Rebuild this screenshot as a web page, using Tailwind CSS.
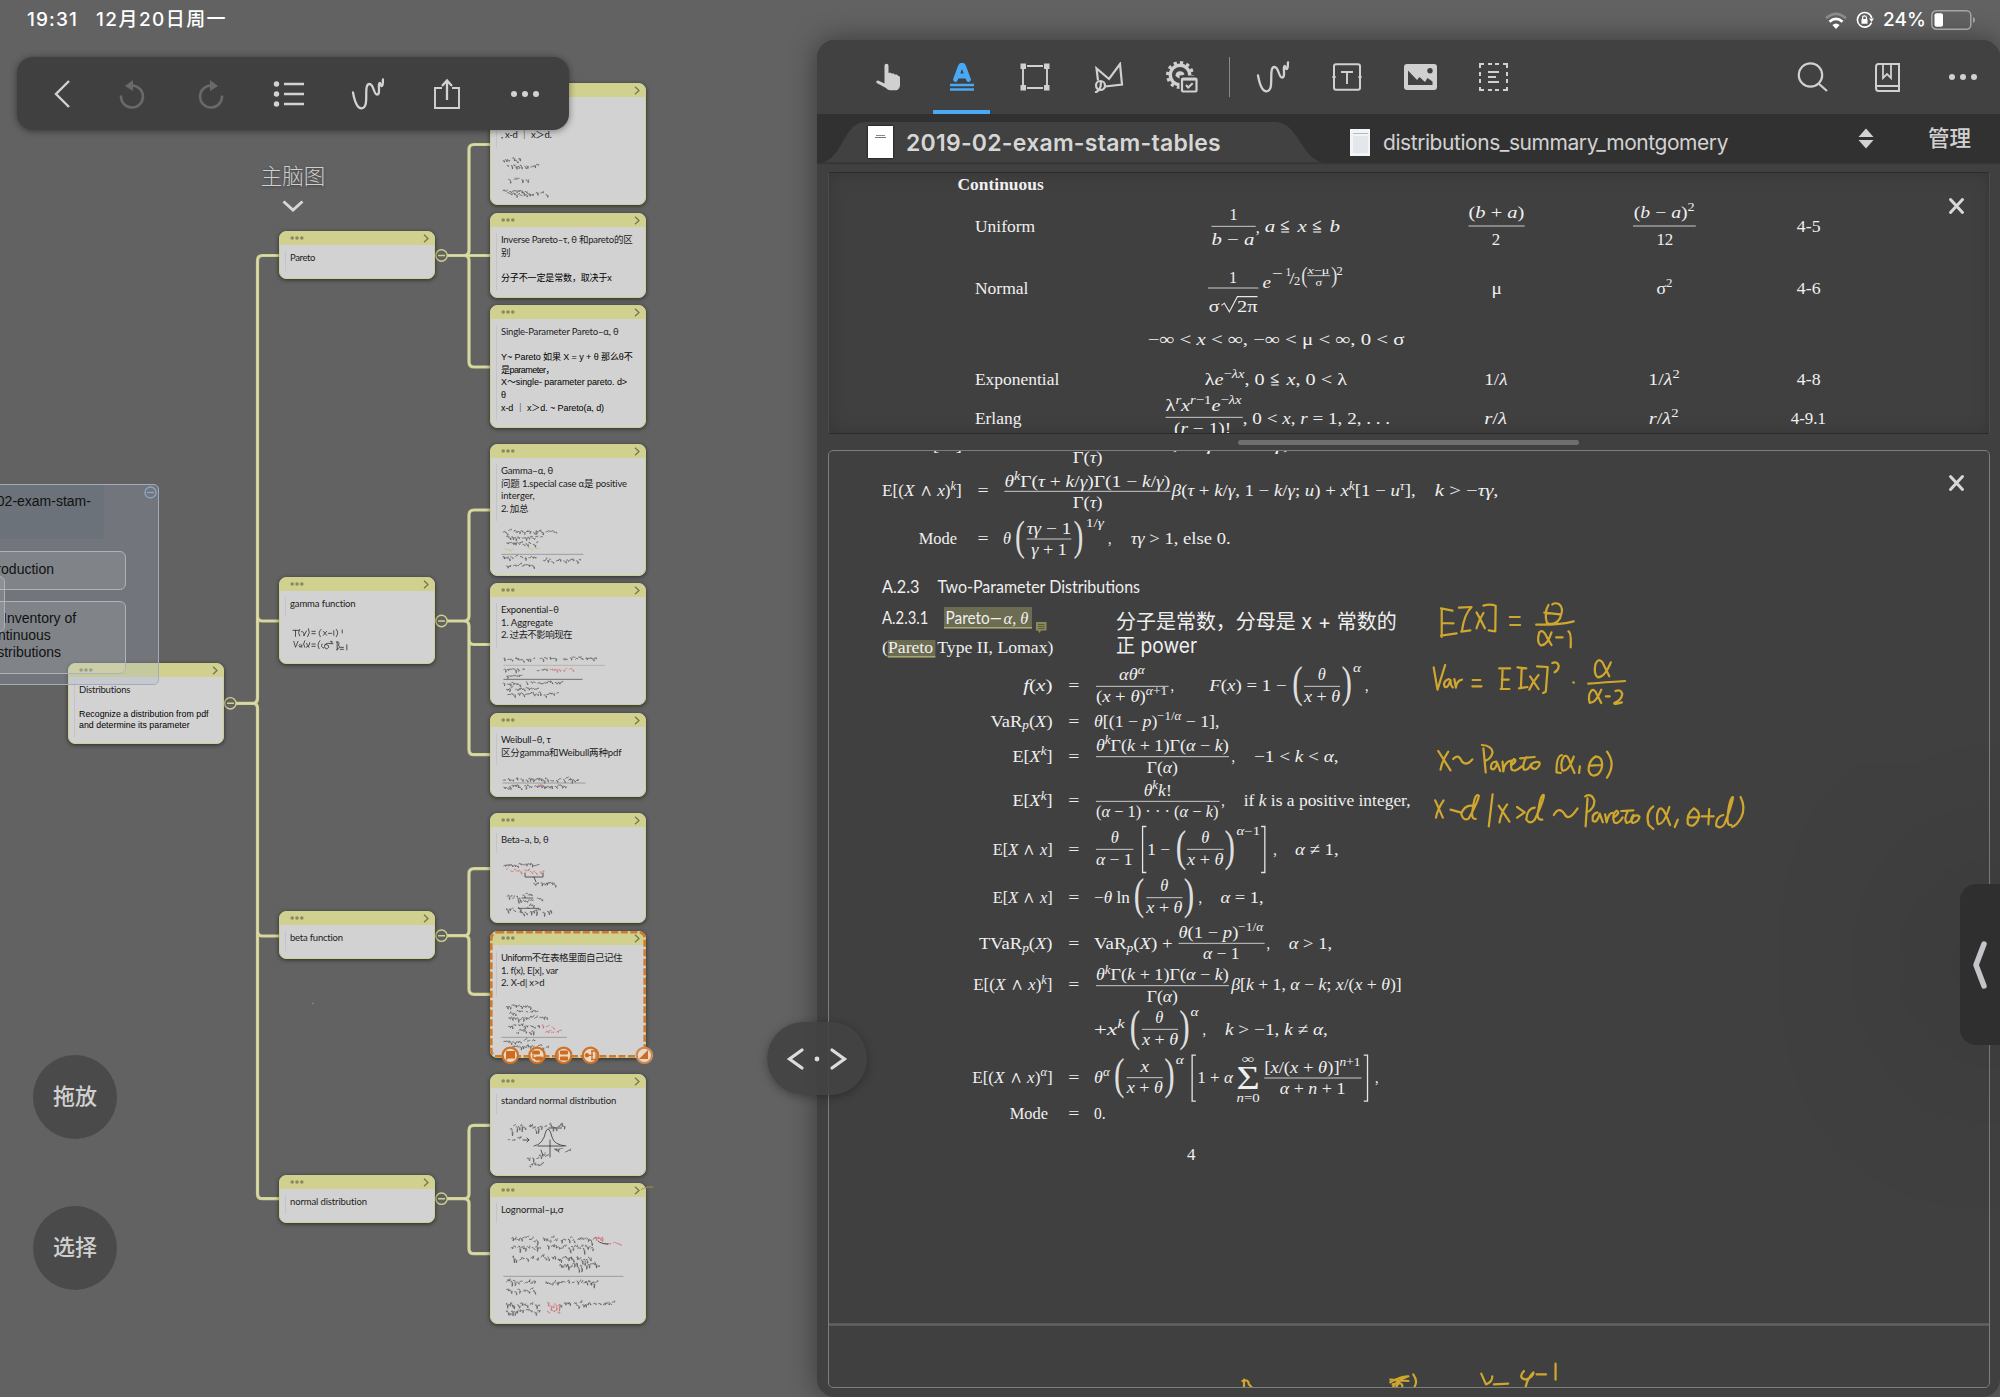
<!DOCTYPE html>
<html lang="zh">
<head>
<meta charset="utf-8">
<title>2019-02-exam-stam-tables</title>
<script src="https://cdn.jsdelivr.net/npm/@tailwindcss/browser@4"></script>
</head>
<body>
<div class="relative flex h-[1397px] w-[2000px] overflow-hidden bg-[#626262] font-['Inter','Noto_Sans_CJK_SC',sans-serif]">

  <!-- Mind map canvas -->
  <section class="relative h-full w-[817px] shrink-0">
    <svg class="absolute left-0 top-0" width="817" height="1397" viewBox="0 0 817 1397" fill="none">
      <defs>
        <g id="links">
          <path d="M236 703.3H253q4.5 0 4.500 -5V261q0-5.500 5-5.500H280M257.500 616q0 5 5 5H280M257.500 931q0 5 5 5H280M253 703.300q4.500 0 4.500 5V1193.700q0 5 5 5H280"/>
          <path d="M447 255.500H464q5 0 5-5V149.500q0-5 5-5H491M464 255.500H491M464 255.500q5 0 5 5V362q0 5 5 5H491"/>
          <path d="M447 621H464q5 0 5-5V515q0-5 5-5H491M464 621q5 0 5 5V749.700q0 5 5 5H491M469 639.500q0 5 5 5H491"/>
          <path d="M447 935.700H464q5 0 5-5V873.700q0-5 5-5H491M464 935.700q5 0 5 5V989.300q0 5 5 5H491"/>
          <path d="M447 1198.700H464q5 0 5-5V1130.300q0-5 5-5H491M464 1198.700q5 0 5 5V1248.700q0 5 5 5H491"/>
        </g>
      </defs>
      <use href="#links" stroke="#d0d18e" stroke-width="3.200"/>
      <use href="#links" stroke="#dcdcb8" stroke-width="1"/>
      <g stroke="#d0d18e" stroke-width="1.400">
        <path d="M236 703.300a5.700 5.700 0 1 0-11.400 0a5.700 5.700 0 1 0 11.400 0M227 703.300h7"/>
        <path d="M447.200 255.500a5.700 5.700 0 1 0-11.400 0a5.700 5.700 0 1 0 11.400 0M438 255.500h7"/>
        <path d="M447.200 621a5.700 5.700 0 1 0-11.400 0a5.700 5.700 0 1 0 11.400 0M438 621h7"/>
        <path d="M447.200 935.700a5.700 5.700 0 1 0-11.400 0a5.700 5.700 0 1 0 11.400 0M438 935.700h7"/>
        <path d="M447.200 1198.700a5.700 5.700 0 1 0-11.400 0a5.700 5.700 0 1 0 11.400 0M438 1198.700h7"/>
      </g>
    </svg>

    <div id="nodes"></div>

    <svg id="sketches" class="absolute left-0 top-0" width="817" height="1397" viewBox="0 0 817 1397" fill="none" stroke-linecap="round" stroke-linejoin="round"></svg>

    <!-- Selection handles of the active card -->
    <svg class="absolute left-0 top-0" width="817" height="1397" viewBox="0 0 817 1397" fill="none">
      <g fill="#e6d9c8" stroke="#cf7226" stroke-width="2.200">
        <circle cx="510.300" cy="1055.300" r="7.700"/><circle cx="537" cy="1055.300" r="7.700"/><circle cx="563.700" cy="1055.300" r="7.700"/><circle cx="590.500" cy="1055.300" r="7.700"/>
        <circle cx="644.400" cy="1055.300" r="7.700" stroke="#cf8a52"/>
      </g>
      <g fill="#cf6a20">
        <path d="M506 1051h9v7.500h-7l-2 1.800z"/>
        <rect x="532" y="1050.500" width="8" height="4" rx="1.500"/><rect x="535" y="1056.500" width="8" height="4" rx="1.500"/>
        <rect x="560" y="1050.500" width="8" height="4" rx="1"/><rect x="560" y="1056.500" width="8" height="4" rx="1"/>
        <circle cx="587" cy="1055.300" r="2.200"/><path d="M648 1050v9h-9z"/>
      </g>
      <path d="M558 1052.500v6M533 1055v3h3M587 1055.300h6M591 1051l5 0M591 1059.500h5M592 1051v8.500M596 1051v8.500" stroke="#cf6a20" stroke-width="1.300"/>
      <path d="M641 1190c3-3 8-3 12-3" stroke="#a89748" stroke-width="1"/>
      <circle cx="313" cy="1003.500" r="1" fill="#8f8a45"/>
    </svg>

    <!-- Document outline group, partly off canvas -->
    <div class="absolute left-[-40px] top-[484px] h-[201px] w-[199px] rounded-[5px] border border-[#a3abb7] bg-[#a5b2cc]/25 font-['Liberation_Sans',sans-serif] text-sm leading-[17px] text-[#111]">
      <div class="h-[54px] w-[143px] bg-[#56646c]/20 pt-[8px] pr-[17px] text-right whitespace-nowrap">2019-02-exam-stam-</div>
      <div class="mt-[12px] flex h-[39px] w-[165px] items-center justify-end rounded-md border border-[#aeb2b8] bg-white/10 pr-[71px] pb-[3px]">Introduction</div>
      <div class="mt-[11px] h-[73px] w-[165px] rounded-md border border-[#aeb2b8] bg-white/10 pt-[8px] pl-[26px] whitespace-nowrap">
        <div class="pl-[15px]">Inventory of</div><div class="-ml-2">Continuous</div><div class="-ml-1">Distributions</div>
      </div>
      <svg class="absolute right-[1px] top-[1px]" width="13" height="13" viewBox="0 0 13 13" fill="none" stroke="#8ea6ca" stroke-width="1.300"><circle cx="6.500" cy="6.500" r="5.500"/><path d="M3 6.500h7"/></svg>
    </div>
    <div class="absolute left-[-20px] top-[576px] h-[56px] w-[25px] rounded-md border border-[#aeb2b8] bg-white/10"></div>

    <header class="absolute left-[27px] top-[6px] flex h-7 items-center gap-[18px] text-[19px] font-medium text-white">
      <span data-w="51">19:31</span><span data-w="131">12月20日周一</span>
    </header>

    <nav class="absolute left-[17px] top-[57px] flex h-[73px] w-[552px] items-center rounded-2xl bg-[#404040] pl-[13px] text-[#d2d2d2] shadow-[0_1px_7px_rgba(0,0,0,0.45)]">
      <span class="flex w-[63px] justify-center"><svg width="20" height="34" viewBox="0 0 20 34" fill="none" stroke="currentColor" stroke-width="2.400"><path d="M17 4L4 17l13 13"/></svg></span>
      <span class="flex w-[78.600px] justify-center text-[#696969]"><svg width="28" height="30" viewBox="0 0 28 30" fill="none" stroke="currentColor" stroke-width="2.600"><path d="M3 16.500A11 11 0 1 0 14 6.500"/><path d="M15 1v11L7 7z" fill="currentColor" stroke="none"/></svg></span>
      <span class="flex w-[78.600px] justify-center text-[#696969]"><svg width="28" height="30" viewBox="0 0 28 30" fill="none" stroke="currentColor" stroke-width="2.600"><path d="M25 16.500A11 11 0 1 1 14 6.500"/><path d="M13 1v11l8-5z" fill="currentColor" stroke="none"/></svg></span>
      <span class="flex w-[78.600px] justify-center"><svg width="32" height="28" viewBox="0 0 32 28" fill="none" stroke="currentColor" stroke-width="2.600"><path d="M11 4h20M11 14h20M11 24h20"/><g fill="currentColor" stroke="none"><circle cx="3.500" cy="4" r="2.700"/><circle cx="3.500" cy="14" r="2.700"/><circle cx="3.500" cy="24" r="2.700"/></g></svg></span>
      <span class="flex w-[78.600px] justify-center"><svg width="34" height="32" viewBox="0 0 34 32" fill="none" stroke="currentColor" stroke-width="2.300" stroke-linecap="round" stroke-linejoin="round"><path d="M2 14.500C3 20 5.500 30.300 10.500 30.300C19.500 30.300 11.500 6 18.500 6C23 6 22.500 16.500 26 16.500C30 16.500 26.500 5.500 28.500 5C30 5 29.500 8.500 31 8C32.500 7 31.500 4 32 1.500"/></svg></span>
      <span class="flex w-[78.600px] justify-center"><svg width="28" height="32" viewBox="0 0 28 32" fill="none" stroke="currentColor" stroke-width="1.900"><path d="M9 10H2v20h24V10h-7"/><path d="M14 22V3M9 8l5-5.500L19 8" stroke-width="2.300"/></svg></span>
      <span class="flex w-[78.600px] justify-center"><svg width="30" height="8" viewBox="0 0 30 8" fill="currentColor"><circle cx="4" cy="4" r="3"/><circle cx="15" cy="4" r="3"/><circle cx="26" cy="4" r="3"/></svg></span>
    </nav>

    <div class="absolute left-[253px] top-[159px] flex w-[80px] flex-col items-center gap-[10px] text-[#cfcfcf]">
      <span class="font-['Noto_Sans_CJK_SC',sans-serif] text-[21.500px] leading-[31px] font-light [text-shadow:0_1px_3px_rgba(0,0,0,.4)]">主脑图</span>
      <svg width="22" height="13" viewBox="0 0 22 13" fill="none" stroke="#d6d6d6" stroke-width="3"><path d="M1.500 1.500L11 10l9.500-8.500"/></svg>
    </div>

    <button class="absolute left-[33px] top-[1055px] size-[84px] rounded-full bg-[#4a4a4a] pb-[5px] font-['Noto_Sans_CJK_SC',sans-serif] text-[22px] font-medium text-[#d0d0d0]">拖放</button>
    <button class="absolute left-[33px] top-[1206px] size-[84px] rounded-full bg-[#4a4a4a] pb-[5px] font-['Noto_Sans_CJK_SC',sans-serif] text-[22px] font-medium text-[#d0d0d0]">选择</button>
  </section>

  <!-- Document reader -->
  <section class="flex h-full w-[1183px] flex-col pt-[40px]">
    <div class="flex h-[1357px] flex-col rounded-[18px] bg-[#404040] shadow-[0_0_28px_rgba(0,0,0,0.42)]">
      <nav class="flex h-[74px] shrink-0 items-center rounded-t-[18px] bg-[#414141] pl-[34.500px] text-[#d0d0d0]">
        <span class="flex w-[73.500px] justify-center"><svg width="26" height="28" viewBox="0 0 26 28" fill="currentColor"><path d="M9.500 2.800a2 2 0 0 1 4 0V10c2-.6 3 .1 3.300.8c1.500-.5 2.700 0 3.100.9c1.600-.3 2.600.2 3.300 1.200c1 0 1.800.6 1.800 1.800V22c0 3-2 5.300-4.600 5.300h-5.200c-2 0-3.200-1-4.200-2.200L1.700 20c-1.200-1.300.5-3.100 2-2.200l5.800 2.600z"/></svg></span>
        <span class="relative flex h-full w-[73.500px] items-center justify-center text-[#49a9f5]"><svg width="26" height="28" viewBox="0 0 26 28" fill="none" stroke="currentColor"><path d="M6.500 16.500L11.500 3.200q1.500-2.400 3 0L19.500 16.500M8.500 13h9" stroke-width="4.800" stroke-linecap="round" stroke-linejoin="round"/><path d="M1 22h24M1 26.500h24" stroke-width="2.300"/></svg><i class="absolute bottom-0 left-[8px] h-[4px] w-[57px] bg-[#49a9f5]"></i></span>
        <span class="flex w-[73.500px] justify-center"><svg width="30" height="28" viewBox="0 0 30 28" fill="none" stroke="currentColor" stroke-width="1.900"><path d="M7 3h16M7 25h16M3 6v16M27 6v16"/><path d="M.5.5H6V6H.500zM24 .5h5.500V6H24zM.5 22H6v5.500H.5zM24 22h5.500v5.500H24z" fill="currentColor" stroke="none"/></svg></span>
        <span class="flex w-[73.500px] justify-center"><svg width="32" height="31" viewBox="0 0 32 31" fill="none" stroke="currentColor" stroke-width="2.200"><path d="M5 18.500L3.500 6.500L16 17L27 2l2 20.500L12 24.500"/><ellipse cx="7.500" cy="23.500" rx="4.500" ry="4.500"/><path d="M2 30.500c4-1 6-5 6-10.500"/></svg></span>
        <span class="flex w-[73.500px] justify-center"><svg width="32" height="32" viewBox="0 0 32 32" fill="none" stroke="currentColor" stroke-width="2.200"><circle cx="14" cy="14" r="12.500" stroke-width="3" stroke-dasharray="3.400 3.400" pathLength="81.600"/><circle cx="14" cy="14" r="9.700" stroke-width="3.400"/><path d="M9.500 15a4.600 4.600 0 0 1 9-1.500l-4 1.500v3.500z" fill="currentColor" stroke="none"/><path d="M13.500 14.500H32v17.500H13.500z" fill="#414141" stroke="none"/><rect x="16" y="17.500" width="14.500" height="13" rx="1"/><path d="M16 18.500h14.500"/><path d="M20 24l2.200 2.500 4.500-4.200" stroke-width="2"/></svg></span>
        <i class="ml-[10px] h-[40px] w-px bg-[#8a8a8a]"></i>
        <span class="ml-[6.500px] flex w-[73.500px] justify-center"><svg width="34" height="32" viewBox="0 0 34 32" fill="none" stroke="currentColor" stroke-width="2.300" stroke-linecap="round" stroke-linejoin="round"><path d="M2 14.500C3 20 5.500 30.300 10.500 30.300C19.500 30.300 11.500 6 18.500 6C23 6 22.500 16.500 26 16.500C30 16.500 26.500 5.500 28.500 5C30 5 29.500 8.500 31 8C32.500 7 31.500 4 32 1.500"/></svg></span>
        <span class="flex w-[73.500px] justify-center"><svg width="30" height="28" viewBox="0 0 30 28" fill="none" stroke="currentColor" stroke-width="2"><rect x="2" y="1.200" width="26" height="25.600" rx="2"/><path d="M9 9h12M15 9v12" stroke-width="1.900"/><path d="M0 14l2-2.500 2 2.500-2 2.500zM26 14l2-2.500 2 2.500-2 2.500z" fill="currentColor" stroke="none"/></svg></span>
        <span class="flex w-[73.500px] justify-center"><svg width="33" height="26" viewBox="0 0 33 26"><rect width="33" height="26" rx="3" fill="currentColor"/><path d="M4 21V6.500L13 16l2.500-3L21 18l2.500-4 5 3.500V21z" fill="#414141"/><circle cx="26" cy="6.800" r="2.700" fill="#414141"/></svg></span>
        <span class="flex w-[73.500px] justify-center"><svg width="29" height="28" viewBox="0 0 29 28" fill="none" stroke="currentColor" stroke-width="2"><path d="M1 5V1h4M9 1h4M16 1h4M24 1h4v4M28 9v4M28 16v4M28 24v3h-4M20 27h-4M13 27H9M5 27H1v-3M1 20v-4M1 13V9"/><path d="M9 9h11M9 14h8M9 19h11" stroke-width="2.200"/></svg></span>
        <span class="ml-auto flex w-[75px] justify-center"><svg width="31" height="30" viewBox="0 0 31 30" fill="none" stroke="currentColor" stroke-width="2.200"><circle cx="13.500" cy="13" r="11.700"/><path d="M21.500 21.500l8.500 7.500"/></svg></span>
        <span class="flex w-[75.500px] justify-center"><svg width="25" height="29" viewBox="0 0 25 29" fill="none" stroke="currentColor" stroke-width="2"><path d="M24 1H3.500Q1 1 1 4v21q0 3 2.500 3H24zM1.500 23H24"/><path d="M8 1v14l4-4 4 4V1" stroke-width="1.800"/></svg></span>
        <span class="flex w-[75px] justify-center"><svg width="30" height="8" viewBox="0 0 30 8" fill="currentColor"><circle cx="4" cy="4" r="3"/><circle cx="15" cy="4" r="3"/><circle cx="26" cy="4" r="3"/></svg></span>
      </nav>

      <div class="relative flex h-[49px] shrink-0 items-center bg-[#313131] text-[#d2d2d2] shadow-[0_1px_1px_rgba(0,0,0,.15)]">
        <svg class="absolute left-0 top-[8px]" width="520" height="41" viewBox="0 0 520 41"><path d="M4 40.500C26 38 26 0 48 0H458C482 0 484 38 507 40.500z" fill="#414141"/></svg>
        <div class="relative mt-[7px] ml-[51px] flex h-[32px] w-[25px] shrink-0 flex-col items-center bg-white pt-[9px] shadow-[0_0_2px_#000]"><i class="h-px w-[9px] bg-[#888]"></i><i class="mt-px h-px w-[11px] bg-[#777]"></i></div>
        <span class="relative ml-[13px] w-[340px] shrink-0 pt-[8px] text-[23px] leading-7 font-semibold whitespace-nowrap text-[#d6d6d6]"><b class="font-semibold" data-w="315">2019-02-exam-stam-tables</b></span>
        <div class="mt-[8px] ml-[104px] flex h-[27px] w-[20px] shrink-0 flex-col items-center gap-[2px] bg-[#f4f4f4] pt-[4px]"><i class="h-px w-[15px] bg-[#a9bccd]"></i><i class="h-[17px] w-[15px] bg-[#e3e6ea]"></i></div>
        <span class="ml-[13px] w-[360px] shrink-0 pt-[8px] text-[21px] leading-7 whitespace-nowrap"><b class="font-normal" data-w="345">distributions_summary_montgomery</b></span>
        <svg class="ml-[115px]" width="16" height="21" viewBox="0 0 16 21" fill="currentColor"><path d="M8 .5L15.500 9H.500zM8 20.500L.5 12h15z"/></svg>
        <span class="ml-[54px] pb-[3px] font-['Noto_Sans_CJK_SC',sans-serif] text-[21.500px] leading-8 font-medium">管理</span>
      </div>

      <div class="relative mt-[9px] ml-[11px] h-[262px] w-[1162px] shrink-0 overflow-hidden rounded-[3px] border border-[#2b2b2b] border-x-[#4b4b4b] bg-[#404040] shadow-[inset_0_0_18px_rgba(0,0,0,.16)]">
        <svg id="table" class="block" width="1160" height="260" viewBox="829 173 1160 260" fill="#f0f0f0"></svg>
      </div>
      <i class="mt-[6px] ml-[421px] h-[5px] w-[341px] shrink-0 rounded-full bg-[#6f6f6f]"></i>
      <div class="relative mt-[5px] ml-[11px] h-[938px] w-[1162px] shrink-0 overflow-hidden rounded-[5px] border-[1.500px] border-[#7d7d7d]">
        <svg id="page" class="block" width="1160" height="936" viewBox="829 452 1160 936" fill="#efefef"></svg>
      </div>
    </div>
  </section>

  <!-- Status icons -->
  <div class="absolute right-[24px] top-[7px] flex h-[26px] items-center text-[19px] font-medium text-white">
    <svg width="22" height="17" viewBox="0 0 22 17" fill="none" stroke="#fff" stroke-width="2.800"><path d="M1 6.200Q11-2.500 21 6.200" stroke="#8b8b8b"/><path d="M4.500 9.800Q11 4 17.500 9.800"/><path d="M11 17l-3.600-4q3.600-3 7.200 0z" fill="#fff" stroke="none"/></svg>
    <svg class="ml-[9px]" width="18" height="18" viewBox="0 0 18 18" fill="none" stroke="#fff" stroke-width="1.600"><path d="M15.500 11.500A7.300 7.300 0 1 1 15.800 7"/><path d="M13 7.500h5l-2.500 3.500z" fill="#fff" stroke="none"/><rect x="5.500" y="8" width="6" height="4.800" rx=".6" fill="#fff" stroke="none"/><path d="M6.600 8.500V6.800a1.900 1.900 0 0 1 3.800 0v1.700" stroke-width="1.200"/></svg>
    <span class="ml-[9px] w-[48px]"><b class="font-medium" data-w="43">24%</b></span>
    <svg width="45" height="20" viewBox="0 0 45 20" fill="none"><rect x=".8" y=".8" width="39" height="18.400" rx="4.500" stroke="#a5a5a5" stroke-width="1.500"/><rect x="3.500" y="3.200" width="8.500" height="13.600" rx="2" fill="#fff"/><path d="M42 7q2 1 2 3t-2 3z" fill="#a5a5a5"/></svg>
  </div>

  <!-- Split handle and side drawer -->
  <div class="absolute left-[767px] top-[1022px] flex h-[73px] w-[100px] items-center justify-center rounded-full bg-[#424242]/90 shadow-[0_2px_10px_rgba(0,0,0,.3)]">
    <svg width="62" height="24" viewBox="0 0 62 24" fill="none" stroke="#dcdcdc" stroke-width="3.200" stroke-linecap="round"><path d="M16 3L3.500 12 16 21M46 3l12.500 9L46 21"/><circle cx="31" cy="12" r="2.400" fill="#dcdcdc" stroke="none"/></svg>
  </div>
  <div class="absolute left-[1960px] top-[884px] flex h-[161px] w-[60px] items-center rounded-[16px] bg-[#2f2f2f] pl-[11px] shadow-[0_0_180px_30px_rgba(0,0,0,.14)]">
    <svg width="18" height="50" viewBox="0 0 18 50" fill="none" stroke="#c4c4c9" stroke-width="5.500" stroke-linecap="round" stroke-linejoin="round"><path d="M13 4L5 25l8 21"/></svg>
  </div>
</div>

<script>
const NS = 'http://www.w3.org/2000/svg';
const el = (tag, attrs, parent) => {
  const e = document.createElementNS(NS, tag);
  for (const k in attrs) e.setAttribute(k, attrs[k]);
  parent.appendChild(e);
  return e;
};
const SERIF = '"Liberation Serif", serif';

/* Formula writer. kx, ky: document units per pixel; x0, y0: origin of the block.
   Letters are italic except inside backticks; ^{} raises and _{} lowers. */
function writer(svg, x0, y0, kx, ky, base) {
  const X = x => x0 + x * kx, Y = y => y0 + y / ky;
  const put = (x1, x2, y, str, o = {}) => {
    const size = o.size || base;
    const t = el('text', {'font-size': size, 'font-family': o.font || SERIF, 'xml:space': 'preserve'}, svg);
    if (o.weight) t.setAttribute('font-weight', o.weight);
    let shift = 0;
    const emit = (s, level) => {
      s.split(/(`[^`]*`)/).forEach(part => {
        if (!part) return;
        const plain = o.plain || part[0] === '`';
        part.replace(/`/g, '').split(plain ? /(?!)/ : /([a-zA-Zα-ω]+)/).forEach((r, i) => {
          if (!r) return;
          const want = level === 1 ? -size * .4 : level === -1 ? size * .16 : 0;
          const sp = el('tspan', {dy: want - shift}, t);
          if (level) sp.setAttribute('font-size', size * .72);
          if (!plain && i % 2) sp.setAttribute('font-style', 'italic');
          sp.textContent = r;
          shift = want;
        });
      });
    };
    str.split(/([\^_]\{[^}]*\})/).forEach(p => {
      if (!o.plain && /^[\^_]\{/.test(p)) emit(p.slice(2, -1), p[0] === '^' ? 1 : -1);
      else emit(p, 0);
    });
    const len = t.getComputedTextLength();
    t.setAttribute('transform', `translate(${X(x1)} ${Y(y)}) scale(${(x2 - x1) * kx / len} 1)`);
    return t;
  };
  const rule = (x1, x2, y) => el('rect', {x: X(x1), y: Y(y) - .5, width: (x2 - x1) * kx, height: 1, fill: '#c9c9c9'}, svg);
  const INK = {'(': [.048, .304, .86, .177], ')': [.029, .285, .86, .177]};
  const delim = (c, x1, x2, y1, y2) => {
    if (c === '[' || c === ']') {
      const [back, tip] = c === '[' ? [X(x1) + .7, X(x2)] : [X(x2) - .7, X(x1)];
      el('path', {d: `M${tip} ${Y(y1) + .5}H${back}V${Y(y2) - .5}H${tip}`, fill: 'none', stroke: '#e4e4e4', 'stroke-width': 1.3}, svg);
      return;
    }
    const [l, r, h, d] = INK[c], fs = (Y(y2) - Y(y1)) / h, s = (x2 - x1) * kx / ((r - l) * fs);
    const t = el('text', {'font-size': fs, 'font-family': SERIF, fill: '#dedede', transform: `translate(${X(x1) - l * fs * s} ${Y(y2) - d * fs}) scale(${s} 1)`}, svg);
    t.textContent = c;
  };
  return {put, rule, delim, X, Y};
}

/* ---- Table of distributions ---- */
const table = document.getElementById('table');
{
  const {put, rule, delim, X, Y} = writer(table, 820, 160, .44643, 3, 17.3);
  put(308, 501, 91, 'Continuous', {plain: 1, weight: 700});
  put(347, 482, 217, '`Uniform`'); put(347, 467, 403, '`Normal`'); put(347, 536, 674, '`Exponential`'); put(347, 451, 791, '`Erlang`');
  put(917, 935, 180, '1'); rule(877, 976, 199); put(877, 973, 256, 'b − a'); put(976, 985, 219, ','); put(996, 1165, 217, 'a ≦ x ≦ b');
  put(916, 934, 369, '1'); rule(869, 982, 384); put(871, 895, 456, '`σ`'); put(934, 980, 456, '`2π`');
  el('path', {d: `M${X(899)} ${Y(436)}l3-2 5 8.500L${X(935)} ${Y(410)}H${X(980)}`, fill: 'none', stroke: '#e6e6e6', 'stroke-width': 1.1}, table);
  put(991, 1010, 384, 'e'); put(1013, 1037, 354, '−', {size: 14}); put(1043, 1055, 349, '1', {size: 12}); put(1051, 1063, 372, '/', {size: 17}); put(1062, 1076, 374, '2', {size: 12});
  delim('(', 1080, 1091, 322, 380); put(1092, 1141, 343, 'x−`μ`', {size: 11}); rule(1092, 1143, 347); put(1110, 1125, 378, '`σ`', {size: 11}); delim(')', 1146, 1157, 322, 380); put(1157, 1171, 346, '2', {size: 12});
  put(734, 1309, 555, '−∞ < x < ∞, −∞ < `μ` < ∞, 0 < `σ`');
  put(862, 1180, 674, '`λ`e^{−λx}, 0 ≦ x, 0 < `λ`');
  put(774, 944, 753, '`λ`^{r}x^{r−1}e^{−λx}'); rule(774, 947, 772); put(793, 921, 823, '(r − 1)!'); put(947, 1277, 791, ', 0 < x, r = 1, 2, . . .');
}
{
  const {put, rule} = writer(table, 1400, 160, .38265, 3, 17.3);
  put(179, 325, 175, '(b + a)'); rule(179, 326, 198); put(240, 262, 256, '2');
  put(611, 770, 175, '(b − a)^{2}'); rule(609, 773, 198); put(670, 714, 256, '12'); put(1037, 1099, 217, '4-5');
  put(239, 266, 403, '`μ`'); put(670, 712, 403, '`σ`^{2}'); put(1037, 1099, 403, '4-6');
  put(220, 281, 674, '1/λ'); put(649, 731, 674, '1/λ^{2}'); put(1037, 1099, 674, '4-8');
  put(220, 280, 791, 'r/λ'); put(650, 728, 791, 'r/λ^{2}'); put(1021, 1113, 791, '4-9.1');
  el('path', {d: 'M1950.500 199.500l12 13m0-13l-12 13', stroke: '#d8d8d8', 'stroke-width': 3, 'stroke-linecap': 'round'}, table);
}

/* ---- PDF page ---- */
const page = document.getElementById('page');
el('path', {d: 'M829 1325.500h1160', stroke: '#626262', 'stroke-width': 2.400}, page);
el('path', {d: 'M1950.500 477.500l12 13m0-13l-12 13', stroke: '#d8d8d8', 'stroke-width': 3, 'stroke-linecap': 'round'}, page);
const hl = (x, y, w, h) => { el('rect', {x, y, width: w, height: h, fill: '#6c6c53'}, page); el('rect', {x, y: y + h - 1.5, width: w, height: 1.5, fill: '#a7a66c'}, page); };
hl(944, 608, 88, 21.5); hl(887.8, 641, 47.6, 17.5);
el('path', {d: 'M1036 623h10.500v8.500h-5.500l-1.500 2.500-1.500-2.500h-2z', fill: '#8a8958'}, page);
el('path', {d: 'M1038 625.500h6.500m-6.500 2h6.500m-6.500 2h6.500', stroke: '#4f4f3c', 'stroke-width': .8}, page);
{
  const {put, rule, delim} = writer(page, 820, 440, .44643, 3, 17);
  const sup = {size: 12}, sans = {plain: 1, font: 'Lato, sans-serif', size: 16.5};
  const eq = (y, x = 556) => put(x, x + 25, y, '=');
  put(228, 318, 36, '`E`[X^{k}]'); put(790, 1050, 34, ',   −τγ < k < γ,'); put(566, 633, 72, 'Γ(τ)');
  put(139, 318, 172, '`E`[(X ∧ x)^{k}]'); eq(172, 353); put(413, 785, 144, 'θ^{k}Γ(τ + k/γ)Γ(1 − k/γ)'); rule(413, 785, 157); put(566, 633, 206, 'Γ(τ)');
  put(788, 1335, 172, 'β(τ + k/γ, 1 − k/γ; u) + x^{k}[1 − u^{τ}],'); put(1377, 1520, 172, 'k > −τγ,');
  put(221, 307, 315, '`Mode`'); eq(315, 353); put(410, 428, 315, 'θ'); delim('(', 440, 457, 245, 355); put(463, 563, 284, 'τγ − 1'); rule(463, 563, 300); put(473, 553, 348, 'γ + 1'); delim(')', 570, 587, 245, 355);
  put(595, 636, 264, '1/γ', sup); put(645, 653, 315, ','); put(696, 920, 315, 'τγ > 1,  `else` 0.');
  put(139, 223, 463, 'A.2.3', sans); put(263, 717, 463, 'Two-Parameter Distributions', sans);
  put(139, 243, 554, 'A.2.3.1', sans); put(281, 408, 554, 'Pareto—', sans); put(411, 467, 554, 'α, θ');
  put(139, 523, 641, '`(Pareto Type II, Lomax)`');
  const cjk = {plain: 1, font: 'Inter, "Noto Sans CJK SC", sans-serif', size: 20.5};
  put(663, 1292, 571, '分子是常数，分母是 x + 常数的', cjk); put(663, 845, 642, '正 power', cjk);
  put(455, 521, 755, 'f(x)'); eq(755); put(670, 727, 724, 'αθ^{α}'); rule(618, 781, 742); put(618, 778, 788, '(x + θ)^{α+1}'); put(785, 793, 755, ',');
  put(872, 1045, 755, 'F(x) = 1 −'); delim('(', 1061, 1079, 685, 798); put(1115, 1133, 722, 'θ'); rule(1084, 1165, 742); put(1084, 1165, 788, 'x + θ'); delim(')', 1170, 1188, 685, 798); put(1194, 1212, 700, 'α', sup); put(1221, 1229, 755, ',');
  put(382, 521, 863, '`VaR`_{p}(X)'); eq(863); put(614, 895, 863, 'θ[(1 − p)^{−1/α} − 1],');
  put(431, 521, 968, '`E`[X^{k}]'); eq(968); put(618, 916, 936, 'θ^{k}Γ(k + 1)Γ(α − k)'); rule(618, 916, 953); put(732, 802, 1001, 'Γ(α)'); put(922, 930, 968, ','); put(972, 1162, 968, '−1 < k < α,');
}
{
  const {put, rule, delim} = writer(page, 820, 770, .44643, 3, 17);
  const sup = {size: 12};
  const eq = y => put(556, 581, y, '=');
  put(431, 521, 112, '`E`[X^{k}]'); eq(112); put(725, 788, 80, 'θ^{k}k!'); rule(618, 895, 97); put(618, 893, 145, '(α − 1) · · · (α − k)'); put(899, 907, 112, ','); put(949, 1323, 112, '`if` k `is a positive integer,`');
  put(387, 521, 258, '`E`[X ∧ x]'); eq(258); put(651, 669, 222, 'θ'); rule(618, 702, 241); put(618, 700, 289, 'α − 1'); delim('[', 721, 731, 171, 312); put(733, 784, 258, '1 −'); delim('(', 800, 818, 186, 298); put(854, 872, 222, 'θ'); rule(822, 904, 241); put(822, 904, 289, 'x + θ'); delim(')', 908, 926, 186, 298); put(933, 986, 199, 'α−1', sup); delim(']', 988, 998, 171, 312); put(1015, 1023, 258, ','); put(1064, 1162, 258, 'α ≠ 1,');
  put(387, 521, 401, '`E`[X ∧ x]'); eq(401); put(614, 694, 401, '−θ `ln`'); delim('(', 706, 724, 331, 444); put(762, 780, 367, 'θ'); rule(731, 812, 386); put(731, 812, 433, 'x + θ'); delim(')', 817, 835, 331, 444); put(848, 856, 401, ','); put(897, 994, 401, 'α = 1,');
  put(356, 521, 540, '`TVaR`_{p}(X)'); eq(540); put(614, 790, 540, '`VaR`_{p}(X) +'); put(803, 993, 507, 'θ(1 − p)^{−1/α}'); rule(803, 996, 523); put(858, 940, 571, 'α − 1'); put(1000, 1008, 540, ','); put(1050, 1147, 540, 'α > 1,');
  put(343, 521, 664, '`E`[(X ∧ x)^{k}]'); eq(664); put(618, 916, 634, 'θ^{k}Γ(k + 1)Γ(α − k)'); rule(618, 916, 650); put(732, 802, 699, 'Γ(α)'); put(921, 1303, 664, 'β[k + 1, α − k; x/(x + θ)]');
  put(614, 682, 797, '+x^{k}'); delim('(', 697, 715, 725, 838); put(751, 769, 763, 'θ'); rule(721, 802, 781); put(721, 802, 828, 'x + θ'); delim(')', 807, 825, 725, 838); put(830, 848, 741, 'α', sup); put(857, 865, 797, ','); put(907, 1138, 797, 'k > −1, k ≠ α,');
  put(341, 521, 941, '`E`[(X ∧ x)^{α}]'); eq(941); put(614, 649, 941, 'θ^{α}'); delim('(', 662, 680, 872, 984); put(718, 737, 909, 'x'); rule(687, 768, 926); put(687, 768, 973, 'x + θ'); delim(')', 773, 791, 872, 984); put(797, 815, 884, 'α', sup); delim('[', 832, 842, 857, 998); put(845, 925, 941, '1 + α');
  put(933, 985, 961, 'Σ', {size: 34}); put(944, 973, 883, '∞', sup); put(933, 985, 998, 'n=0', sup); put(995, 1211, 911, '[x/(x + θ)]^{n+1}'); rule(995, 1213, 927); put(1030, 1177, 974, 'α + n + 1'); delim(']', 1218, 1228, 857, 998); put(1243, 1251, 941, ',');
  put(425, 511, 1051, '`Mode`'); eq(1051); put(614, 640, 1051, '0.'); put(822, 841, 1172, '4');
}

/* ---- Pen annotations ---- */
const pen = (tf, paths) => {
  const g = el('g', {transform: tf, fill: 'none', stroke: '#cfa72f', 'stroke-width': 2.2, 'stroke-linecap': 'round', 'stroke-linejoin': 'round'}, page);
  paths.forEach(d => el('path', {d, 'vector-effect': 'non-scaling-stroke'}, g));
};
pen('translate(1400 580) scale(.38265 .33333)', [
  'M109 90V174M107 88L137 95M109 132L140 133M107 170L148 163', 'M154 86L187 84Q168 105 162 155M160 158L184 154', 'M200 100Q210 120 222 148M218 102Q205 125 200 148', 'M218 80Q235 74 250 80L249 157L232 154',
  'M287 114H313M288 138H314', 'M388 78Q376 100 384 132Q404 142 418 118Q430 85 415 75Q405 70 398 76M377 101L418 106M356 137Q420 138 454 127',
  'M396 160Q385 200 368 199Q356 190 364 160Q374 148 384 175L396 198M408 175H425M440 157Q448 160 446 205',
  'M88 265L98 332L118 258M128 300Q112 305 116 322Q124 332 132 303Q132 320 138 325M142 300L146 326Q148 305 162 302', 'M190 303H210M189 322H213',
  'M259 268L288 268M268 275L266 328M266 302H284M263 330H286', 'M307 265L330 268M318 268L316 326M311 328L333 324M340 292L362 330M362 288Q346 310 338 332', 'M358 262L386 264L381 338L374 342', 'M398 252Q412 246 415 262Q413 275 404 280', 'M453 310l1 1',
  'M551 250Q535 295 517 295Q505 285 511 255Q518 235 529 250L547 292M492 314Q560 308 588 306', 'M526 332Q512 372 496 372Q490 350 500 335Q508 328 514 345L526 372M538 352H548M563 336Q578 330 581 345Q578 365 560 372Q558 378 580 370',
  'M100 516L132 574M126 518Q110 545 106 572M139 540Q152 522 162 548Q175 562 189 541', 'M218 508L224 580M214 498Q240 500 242 520Q238 540 224 545M252 548Q236 548 238 568Q248 578 254 552L262 576M268 548L270 577Q272 550 290 545M290 560Q308 545 298 540Q286 550 292 572Q300 580 318 562M314 538L352 534M330 535Q318 560 324 572Q336 574 342 556Q354 545 364 550Q368 560 354 570Q340 570 344 555',
  'M423 528Q408 532 409 580L420 582M454 533Q440 580 424 574Q418 550 428 533Q438 522 446 556L456 582M470 562L468 582', 'M512 532Q492 545 493 575Q500 598 518 585Q534 565 525 540Q518 530 510 534M496 560L526 558M541 518Q565 555 541 596',
  'M92 664L112 716M114 664Q98 690 94 716M132 692L158 700M188 680Q168 678 160 705Q166 728 180 718Q205 665 206 650Q196 640 190 690Q184 720 198 720M242 646L232 742', 'M258 680L286 728M280 676Q264 700 260 730M306 684L326 700L306 716M352 686Q332 688 330 722Q340 738 352 722Q376 665 376 648Q368 645 362 690Q354 724 372 722',
  'M402 708Q415 680 430 705Q440 730 464 688', 'M490 658L485 742M484 652Q500 640 508 665Q508 690 488 700M516 700Q500 705 504 725Q514 736 522 704L530 730M536 706L540 730Q546 700 556 702M558 716Q578 700 566 695Q552 708 560 730Q570 738 582 715M578 696L610 694M596 695Q584 720 592 732Q604 730 610 712Q622 705 626 714Q622 730 608 732Q600 722 610 708',
  'M662 682Q640 700 650 738L662 750M704 684Q690 738 674 735Q668 710 676 692Q684 680 694 705L706 738M726 722L718 744', 'M768 688Q748 705 752 734Q765 750 778 725Q788 700 768 688M756 715H782M788 712H820M808 690L806 736M845 708Q826 712 826 740Q838 752 848 735Q870 670 870 654Q860 660 856 715Q854 742 866 738M890 654Q904 685 892 715Q880 740 868 744']);
pen('translate(760 1000) scale(.79082 .33333)', ['M610 1146Q618 1140 618 1155L622 1166M612 1142V1166', 'M797 1150Q812 1130 820 1132Q804 1145 800 1166M797 1142L820 1146M800 1156Q814 1146 812 1166M812 1134L804 1166M826 1126Q832 1145 828 1162', 'M912 1124L918 1156Q926 1150 926 1132M928 1156L946 1154M966 1116Q958 1136 968 1142Q976 1136 978 1124M978 1120Q970 1140 968 1166M982 1126H994M1006 1094V1142']);

/* ---- Mind map cards: x, y, height, lines [text, width, font] ---- */
const C3 = 490, C2 = 279;
const cards = [
  [C3, 83, 122, [['', 0], ['', 0], [', x-d ｜ x＞d.', 50.5]]],
  [C3, 213, 84.5, [['Inverse Pareto–τ, θ 和pareto的区', 131.5], ['别', 9], ['', 0], ['分子不一定是常数，取决于x', 110.7, 1]]],
  [C3, 305, 122.5, [['Single-Parameter Pareto–α, θ', 117.5], ['', 0], ['Y~ Pareto 如果 X = y + θ 那么θ不', 131.7, 1], ['是parameter，', 53, 1], ['X～single- parameter pareto. d>', 126, 1], ['θ', 5, 1], ['x-d ｜ x＞d. ~ Pareto(a, d)', 103, 1]]],
  [C3, 444, 131.5, [['Gamma–α, θ', 52], ['问题 1.special case α是 positive', 126], ['interger,', 33.7], ['2. 加总', 27]]],
  [C3, 583, 122, [['Exponential–θ', 58], ['1. Aggregate', 52], ['2. 过去不影响现在', 71]]],
  [C3, 713, 84, [['Weibull–θ, τ', 49.7], ['区分gamma和Weibull两种pdf', 120.4]]],
  [C3, 813, 109.5, [['Beta–a, b, θ', 47.6]]],
  [C3, 931, 126.5, [['Uniform不在表格里面自己记住', 121], ['1. f(x), E[x], var', 57], ['2. X-d| x>d', 43.4]], 1],
  [C3, 1074, 101.5, [['standard normal distribution', 115.3]]],
  [C3, 1183, 141, [['Lognormal–μ,σ', 62.3]]],
  [C2, 231, 48, [['Pareto', 25]]],
  [C2, 576.5, 87.5, [['gamma function', 65.7]]],
  [C2, 911, 48, [['beta function', 53]]],
  [C2, 1174.500, 48, [['normal distribution', 77]]],
  [68, 662.5, 81, [['Distributions', 51.4], ['', 0], ['Recognize a distribution from pdf', 129.6, 2], ['and determine its parameter', 110.7, 2]]],
];
const esc = s => s.replace(/</g, '&lt;').replace(/>/g, '&gt;');
document.getElementById('nodes').innerHTML = cards.map(([x, y, h, lines, sel]) => `
  <article class="absolute flex w-[156px] flex-col overflow-hidden rounded-[7px] border-[1.500px] border-[#cfd08e] bg-[#d2d2d2] shadow-[0_1px_4px_rgba(0,0,0,0.55)]" style="left:${x}px;top:${y}px;height:${h}px">
    <div class="flex h-[13px] shrink-0 items-center justify-between bg-[#d0d08f] pr-[5px] pl-[10px]">
      <svg width="14" height="5" viewBox="0 0 14 5" fill="#8a8a62"><circle cx="2.200" cy="2" r="1.800"/><circle cx="7" cy="2" r="1.800"/><circle cx="11.800" cy="2" r="1.800"/></svg>
      <svg width="6" height="9" viewBox="0 0 6 9" fill="none" stroke="#77774f" stroke-width="1.300"><path d="M1 .8l4 3.700-4 3.700"/></svg>
    </div>
    <div class="mt-[6px] ml-[5px] w-fit border-l border-[#c2c5c8] pt-[1px] pb-[6px] pl-[4px] font-['Lato','Noto_Sans_CJK_SC',sans-serif] text-[9.500px] leading-[12.600px] text-[#1c1c1c]">
      ${lines.map(([t, w, f]) => `<div class="${f === 2 ? "h-[11px] font-['Liberation_Sans',sans-serif] text-[8.800px] leading-[11px] whitespace-nowrap text-black" : f ? "h-[12.600px] font-['Liberation_Sans','Noto_Sans_CJK_SC',sans-serif] text-[9px] whitespace-nowrap text-black" : "h-[12.600px] whitespace-nowrap"}"><span data-w="${w}">${esc(t)}</span></div>`).join('')}
    </div>
  </article>${sel ? `<svg class="absolute" style="left:${x}px;top:${y}px" width="156" height="127" fill="none"><rect x="1.300" y="1.300" width="153.400" height="124" rx="6" stroke="#cf7a2c" stroke-width="2.600" stroke-dasharray="7 2.500"/></svg>` : ''}`).join('');

/* Tune letter spacing so every label fills its measured column. */
const fitLabels = () => document.querySelectorAll('[data-w]').forEach(s => {
  const n = [...s.textContent].length;
  if (n < 2) return;
  s.style.display = 'inline-block';
  s.style.whiteSpace = 'nowrap';
  s.style.letterSpacing = '0px';
  s.style.letterSpacing = (s.dataset.w - s.getBoundingClientRect().width) / n + 'px';
});
fitLabels();
addEventListener('load', () => { fitLabels(); requestAnimationFrame(fitLabels); });
document.fonts.ready.then(fitLabels);
new ResizeObserver(fitLabels).observe(document.querySelector('article'));

/* ---- Handwritten notes inside the cards ---- */
const sk = document.getElementById('sketches');
let seed = 7;
const rnd = () => (seed = (seed * 16807) % 2147483647) / 2147483647;
const note = (oy, x1, x2, y, h, color = '#2c2c2c') => {
  const a = x1 * .42092, b = x2 * .42092, cy = oy + y / 3, hh = h / 7.5;
  let d = '', x = a;
  while (x < b) {
    const w = 1.4 + rnd() * 1.6;
    d += `M${x.toFixed(1)} ${(cy + (rnd() * 2 - 1) * hh * .7).toFixed(1)}q${(w * rnd()).toFixed(1)} ${(-hh * 1.4 * rnd()).toFixed(1)} ${(w * .7).toFixed(1)} ${((rnd() - .3) * hh * 1.6).toFixed(1)}t${(w * .3).toFixed(1)} ${(-(rnd() - .2) * hh).toFixed(1)}`;
    x += w + (rnd() > .8 ? 2.5 : .4);
  }
  el('path', {d, stroke: color, 'stroke-width': .65, opacity: .8}, sk);
};
const bar = (oy, x1, x2, y, c = '#8d8d8d') => el('path', {d: `M${x1 * .42092} ${oy + y / 3}H${x2 * .42092}`, stroke: c, 'stroke-width': .8}, sk);
const R = '#cc4a55', YL = '#c9bd55';
[[0,1195,1240,478,14],[0,1205,1278,498,14],[0,1208,1250,536,22],[0,1195,1250,572,12],[0,1205,1303,582,14],
 [430,1195,1322,305,12],[430,1203,1285,322,12],[430,1203,1277,340,12],[430,1197,1217,359,7,YL],[430,1254,1278,355,7,YL],[430,1195,1273,382,13],[430,1203,1268,407,11],[430,1290,1380,391,13],
 [430,1197,1270,688,11],[430,1283,1322,685,11],[430,1338,1422,685,11],[430,1197,1243,717,12],[430,1203,1243,738,11],[430,1276,1300,720,11],[430,1306,1363,720,11,R],[430,1195,1235,760,11],[430,1250,1335,758,11],[430,1203,1277,776,11],[430,1206,1327,791,13],
 [430,1195,1380,1049,15],[430,1197,1342,1069,14],[430,1278,1290,1064,8,R],
 [860,1197,1276,15,12],[860,1203,1292,33,15,R],[860,1268,1318,69,14],[860,1205,1236,114,24],[860,1242,1266,105,14],[860,1242,1266,122,10],[860,1276,1290,112,14],[860,1203,1232,147,18],[860,1252,1264,138,14],[860,1234,1308,155,18],
 [860,1203,1266,438,12],[860,1210,1240,457,14],[860,1250,1274,456,11],[860,1208,1297,475,16],[860,1208,1280,497,14],[860,1288,1322,496,14,R],[860,1227,1270,515,15],[860,1296,1338,514,13,R],[860,1197,1274,545,14],[860,1217,1300,560,13],
 [860,1212,1250,803,22],[860,1257,1298,803,22],[860,1306,1340,799,22],[860,1207,1237,839,18],[860,1318,1350,872,18],[860,1252,1298,893,22],[860,1257,1288,914,14],
 [860,1215,1278,1138,20],[860,1290,1318,1136,18],[860,1333,1410,1138,20],[860,1413,1430,1130,20,R],[860,1215,1280,1162,20],[860,1300,1405,1162,20],[860,1437,1475,1150,9,R],[860,1218,1320,1196,22],[860,1326,1398,1196,20],[860,1330,1420,1218,22],[860,1203,1272,1267,18],[860,1203,1272,1290,18],[860,1297,1416,1268,20],[860,1203,1282,1333,18],[860,1203,1282,1354,18],[860,1330,1356,1331,18],[860,1364,1455,1331,18],[860,1300,1328,1333,26,R],[860,1300,1328,1354,14,R]
].forEach(a => note(...a));
bar(430,1192,1385,373); bar(430,1197,1436,706,'#aaa'); bar(430,1197,1383,748,'#555'); bar(430,1195,1390,1059); bar(860,1192,1346,532); bar(860,1197,1480,1249);
bar(860,1240,1266,114,'#444'); bar(860,1232,1280,145,'#444'); bar(860,1304,1334,804,'#333');
el('path', {d: 'M525 873v4h18v-4M534 877l2 5M534 1146q9-1 12-15q3-6 6 6q2 8 14 9M550 1140v17M538 1146h26M541 1150l2 6M555 1149l4 3M523 1140h6l-2-2m2 2l-2 2M598 1241q3 3 10 3', stroke: '#333', 'stroke-width': .8}, sk);
/* gamma function note */
el('g', {transform: 'translate(0 430) scale(.42092 .33333)', fill: 'none', stroke: '#333', 'stroke-width': 2.2}, sk).innerHTML =
  '<path d="M696 601h14M702 601v18M712 598q-6 10 0 20M716 605q8-2 6 12M728 603l-6 14M733 596q5 12-2 24M741 604h8M741 611h8M763 598q-9 10-2 22M768 604l8 12M776 604l-8 12M780 610h8M793 602v14M799 598q7 10 0 22M813 600v9"/><path d="M698 634l4 18 6-18M713 642q-6 4 0 10l4-8v8M724 632q-6 10 0 20M728 640l6 12M736 638q2 8-8 14M741 642h8M741 649h8M760 632q-8 12-2 24M765 642q-4 10 4 12M784 640q-14-2-13 10q3 12 10 2q0-10-8-8M785 634q6-2 4 4l-4 3h6M799 636q10-2 5 9q6 8-4 14M801 636v24M808 652h8M808 658h8M824 644v16"/>';
</script>
</body>
</html>
